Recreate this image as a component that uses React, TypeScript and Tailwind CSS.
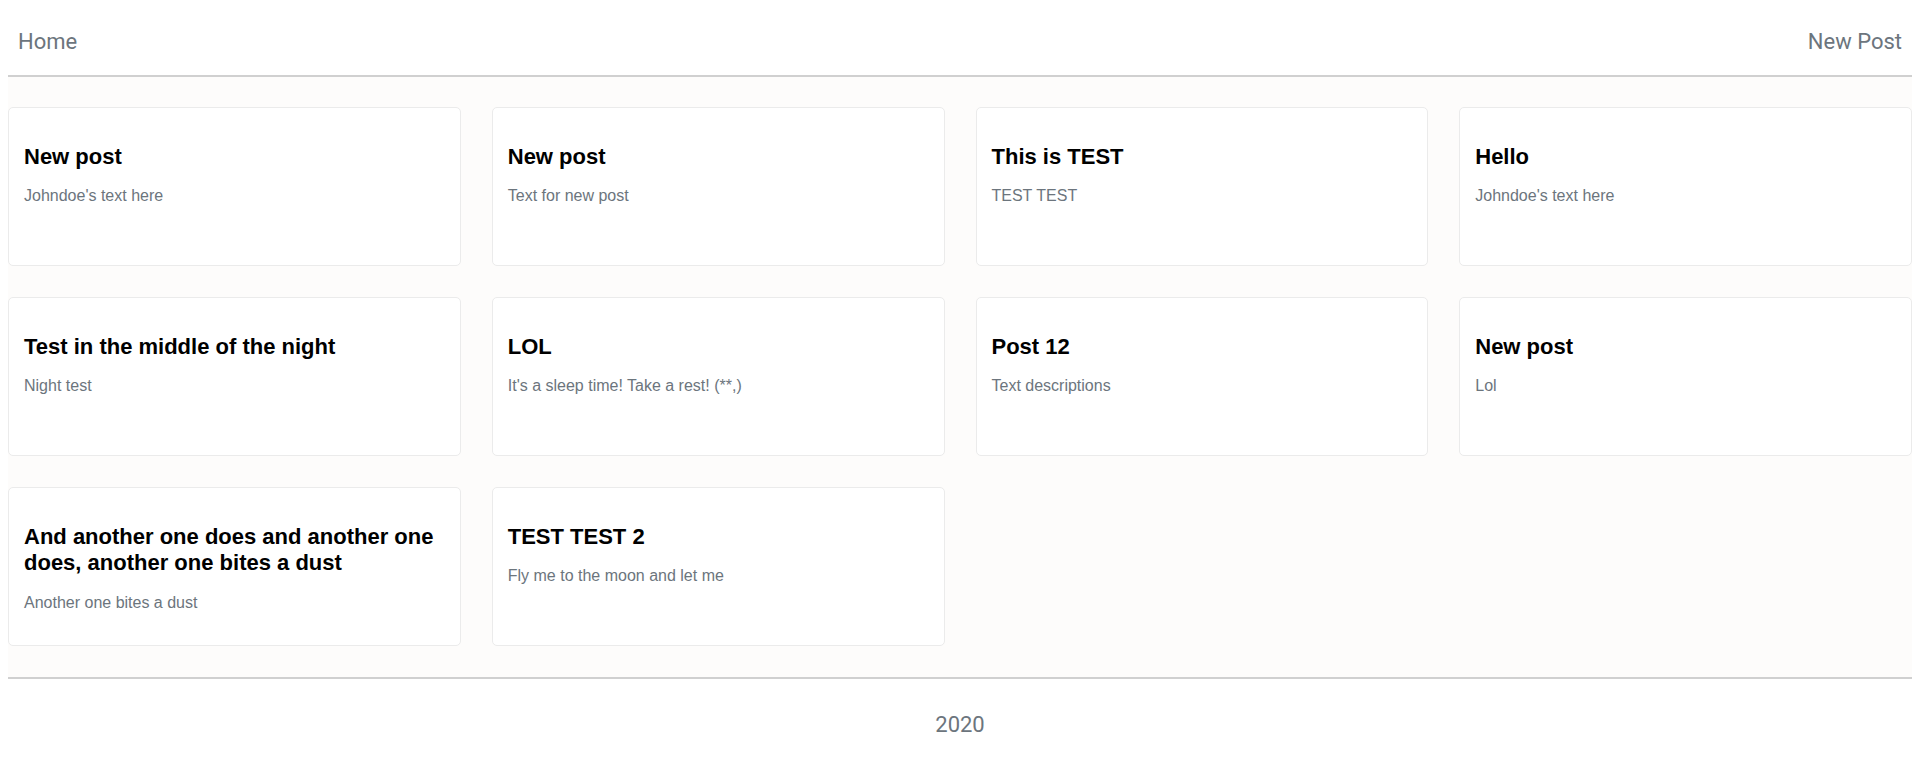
import React from "react";

const posts = [
  { title: "New post", text: "Johndoe's text here" },
  { title: "New post", text: "Text for new post" },
  { title: "This is TEST", text: "TEST TEST" },
  { title: "Hello", text: "Johndoe's text here" },
  { title: "Test in the middle of the night", text: "Night test" },
  { title: "LOL", text: "It's a sleep time! Take a rest! (**,)" },
  { title: "Post 12", text: "Text descriptions" },
  { title: "New post", text: "Lol" },
  { title: "And another one does and another one does, another one bites a dust", text: "Another one bites a dust" },
  { title: "TEST TEST 2", text: "Fly me to the moon and let me" },
];

export default function App() {
  return (
    <div className="min-h-[771px] flex flex-col bg-white px-2">
      <header className="h-[75px] flex items-start justify-between pt-[25px] px-[10px] font-['Roboto',sans-serif] text-[22px] leading-[33px] text-[#6c757d]">
        <a>Home</a>
        <a>New Post</a>
      </header>
      <main className="border-t-2 border-b-2 border-[#d0d0d0] bg-[#fdfcfb] pt-[30px] pb-[31px]">
        <div className="grid grid-cols-4 gap-x-[31px] gap-y-[31px]">
          {posts.map((p, i) => (
            <div
              key={i}
              className="h-[159px] bg-white border border-[#ebebeb] rounded-[5px] px-[15px] pt-[36px] font-['Liberation_Sans',Arial,sans-serif]"
            >
              <h2 className="text-[22px] leading-[1.2] font-bold text-black">{p.title}</h2>
              <p className="mt-[14px] text-[16px] leading-[24px] text-[#6c757d]">{p.text}</p>
            </div>
          ))}
        </div>
      </main>
      <footer className="flex-1 flex justify-center pt-[29px] font-['Roboto',sans-serif] text-[22px] leading-[33px] text-[#6c757d]">
        2020
      </footer>
    </div>
  );
}
